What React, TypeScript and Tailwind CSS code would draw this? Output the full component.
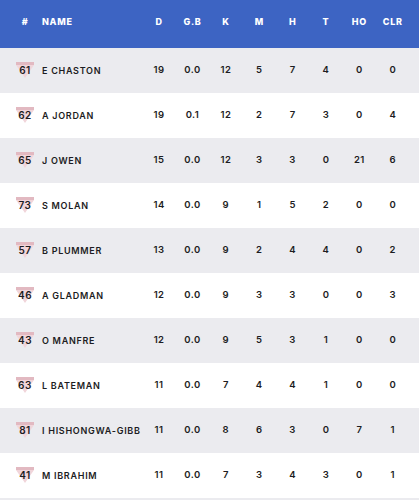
import React from 'react';

const cols = ['D', 'G.B', 'K', 'M', 'H', 'T', 'HO', 'CLR'];

const players: [string, string, (string | number)[]][] = [
  ['61', 'E CHASTON', [19, '0.0', 12, 5, 7, 4, 0, 0]],
  ['62', 'A JORDAN', [19, '0.1', 12, 2, 7, 3, 0, 4]],
  ['65', 'J OWEN', [15, '0.0', 12, 3, 3, 0, 21, 6]],
  ['73', 'S MOLAN', [14, '0.0', 9, 1, 5, 2, 0, 0]],
  ['57', 'B PLUMMER', [13, '0.0', 9, 2, 4, 4, 0, 2]],
  ['46', 'A GLADMAN', [12, '0.0', 9, 3, 3, 0, 0, 3]],
  ['43', 'O MANFRE', [12, '0.0', 9, 5, 3, 1, 0, 0]],
  ['63', 'L BATEMAN', [11, '0.0', 7, 4, 4, 1, 0, 0]],
  ['81', 'I HISHONGWA-GIBB', [11, '0.0', 8, 6, 3, 0, 7, 1]],
  ['41', 'M IBRAHIM', [11, '0.0', 7, 3, 4, 3, 0, 1]],
];

const Badge = ({ num }: { num: string }) => (
  <div className="relative flex h-[16px] w-[18px] items-center justify-center">
    <svg className="absolute left-0 top-[-1px]" width="18" height="16" viewBox="0 0 18 16">
      <path d="M0 0 H18 V3 L9 16 L0 3 Z" fill="#f1d5da" />
      <path d="M0 0 H18 V3 H0 Z" fill="#e2b9c1" />
    </svg>
    <span className="relative text-[10px] font-semibold tracking-[0.05em] text-[#1c1c22]">{num}</span>
  </div>
);

export default function App() {
  return (
    <div className="w-[419px] h-[500px] overflow-hidden bg-white font-['Inter','Liberation_Sans',sans-serif]">
      <div className="flex h-[48px] items-start bg-[#3d64c3] pl-[8px] pr-[9.5px] pt-[15px] text-[9px] font-extrabold tracking-[0.08em] text-white">
        <div className="w-[34px] text-center">#</div>
        <div className="flex-1">NAME</div>
        {cols.map((c) => (
          <div key={c} className="w-[33.4px] text-center">
            {c}
          </div>
        ))}
      </div>
      {players.map(([num, name, stats], i) => (
        <div
          key={num}
          className={`flex h-[45px] items-center pl-[8px] pr-[9.5px] text-[9.5px] font-semibold text-[#1c1c22] ${
            i % 2 === 0 ? 'bg-[#ebebef]' : 'bg-white'
          }`}
        >
          <div className="flex w-[34px] justify-center">
            <Badge num={num} />
          </div>
          <div className="min-w-0 flex-1 whitespace-nowrap text-[9px] tracking-[0.08em]">{name}</div>
          {stats.map((s, j) => (
            <div key={j} className="w-[33.4px] text-center tracking-[0.05em]">
              {s}
            </div>
          ))}
        </div>
      ))}
      <div className="h-[45px] bg-[#ebebef]" />
    </div>
  );
}
